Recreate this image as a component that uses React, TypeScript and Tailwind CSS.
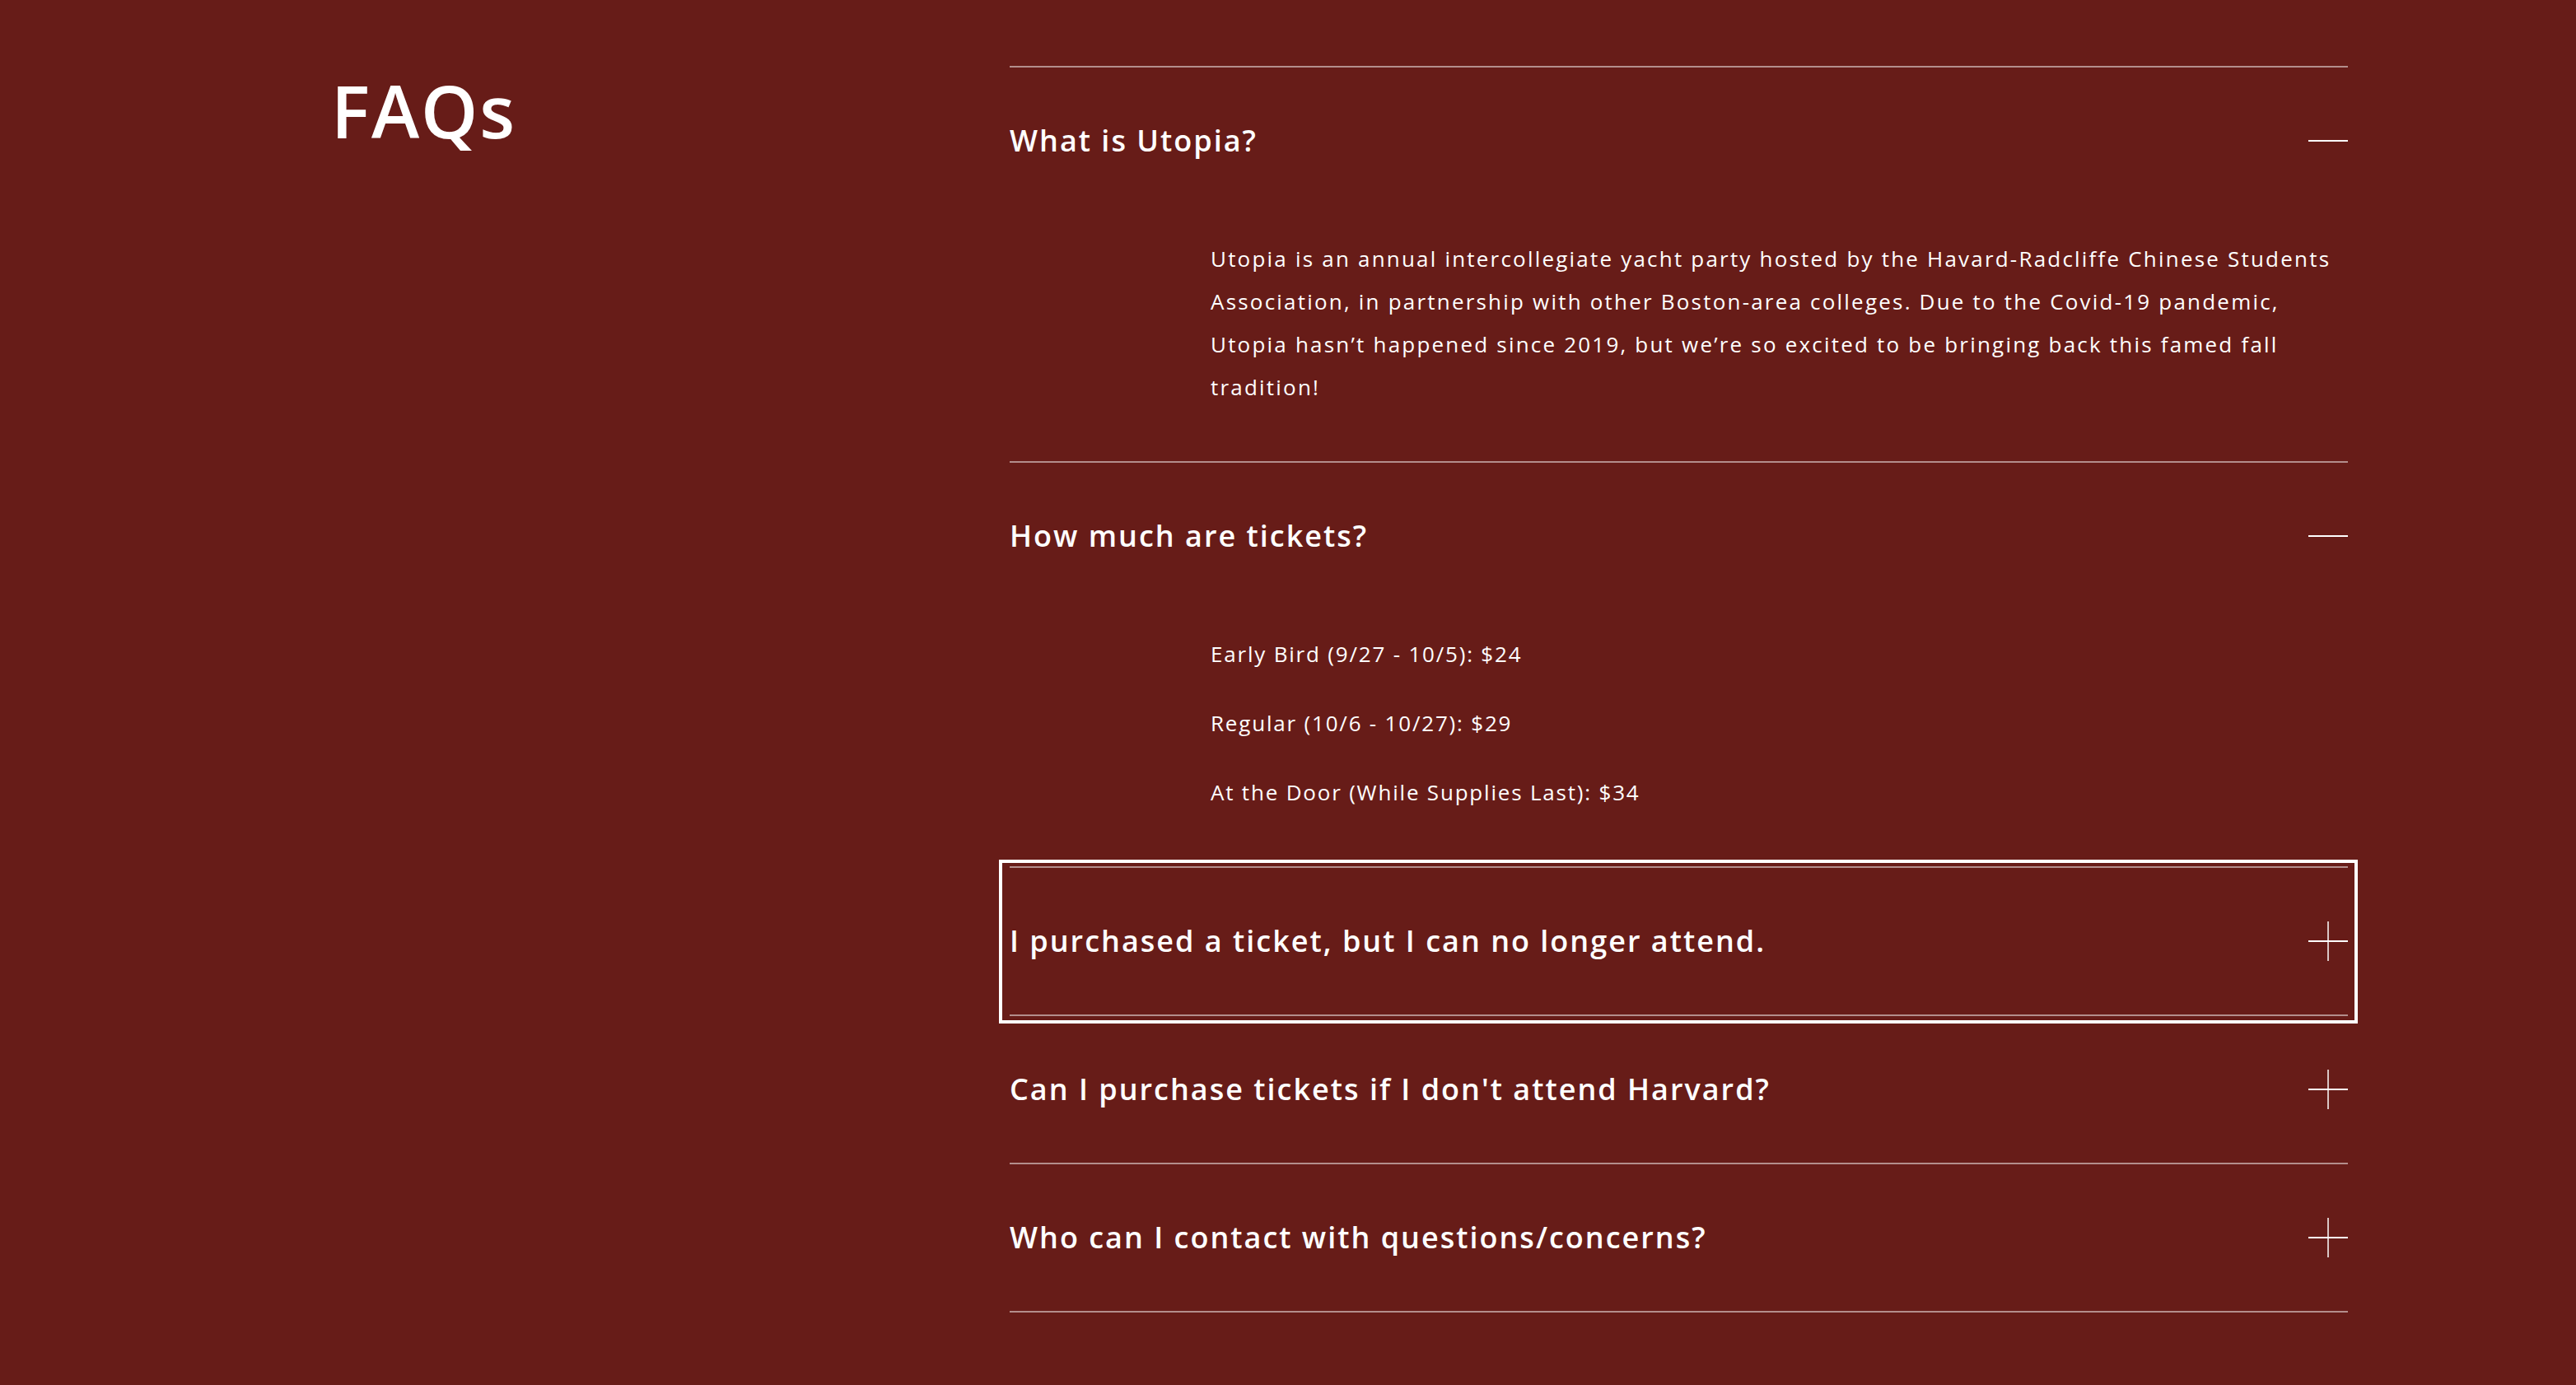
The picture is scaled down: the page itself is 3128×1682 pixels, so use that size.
import React, { useState } from 'react';

type Faq = {
  question: string;
  answer: React.ReactNode;
};

const FAQS: Faq[] = [
  {
    question: 'What is Utopia?',
    answer: (
      <p>
        Utopia is an annual intercollegiate yacht party hosted by the Havard-Radcliffe Chinese Students
        Association, in partnership with other Boston-area colleges. Due to the Covid-19 pandemic,
        Utopia hasn’t happened since 2019, but we’re so excited to be bringing back this famed fall
        tradition!
      </p>
    ),
  },
  {
    question: 'How much are tickets?',
    answer: (
      <div className="flex flex-col gap-[32px] tracking-[1.8px]">
        <p>Early Bird (9/27 - 10/5): $24</p>
        <p>Regular (10/6 - 10/27): $29</p>
        <p>At the Door (While Supplies Last): $34</p>
      </div>
    ),
  },
  { question: 'I purchased a ticket, but I can no longer attend.', answer: null },
  { question: "Can I purchase tickets if I don't attend Harvard?", answer: null },
  { question: 'Who can I contact with questions/concerns?', answer: null },
];

const ToggleIcon = ({ open }: { open: boolean }) => (
  <svg width="48" height="48" viewBox="0 0 48 48" className="shrink-0">
    <line x1="0" y1="24" x2="48" y2="24" stroke="white" strokeWidth="2" />
    {!open && <line x1="24" y1="0" x2="24" y2="48" stroke="white" strokeWidth="1.5" />}
  </svg>
);

export default function App() {
  const [openItems, setOpenItems] = useState<number[]>([0, 1]);
  const [focused, setFocused] = useState<number | null>(2);

  const toggle = (i: number) => {
    setFocused(i);
    setOpenItems(prev => (prev.includes(i) ? prev.filter(x => x !== i) : [...prev, i]));
  };

  return (
    <div className="min-h-screen bg-[#671c18] text-white font-['Open_Sans',sans-serif]">
      <div className="flex pl-[402px] pt-[80px]">
        {/* Title */}
        <div className="w-[824px] shrink-0">
          <h2 className="mt-[10px] text-[88px] leading-none font-semibold tracking-[2px]">FAQs</h2>
        </div>

        {/* Accordion */}
        <div className="w-[1625px] border-b-2 border-white/50">
          {FAQS.map((faq, i) => {
            const open = openItems.includes(i) && faq.answer !== null;
            return (
              <div key={faq.question} className="relative border-t-2 border-white/50">
                <button
                  onClick={() => toggle(i)}
                  className="flex h-[178px] w-full items-center justify-between text-left outline-none"
                >
                  <span className="text-[36px] leading-none font-semibold tracking-[2px]">{faq.question}</span>
                  <ToggleIcon open={open} />
                </button>
                {open && (
                  <div className="pl-[244px] pr-[8px] pt-[28px] pb-[64px] text-[26px] leading-[52px] font-normal tracking-[2.2px]">
                    {faq.answer}
                  </div>
                )}
                {focused === i && (
                  <div className="pointer-events-none absolute -top-[10px] -bottom-[11px] -left-[13px] -right-[12px] border-4 border-white" />
                )}
              </div>
            );
          })}
        </div>
      </div>
    </div>
  );
}
